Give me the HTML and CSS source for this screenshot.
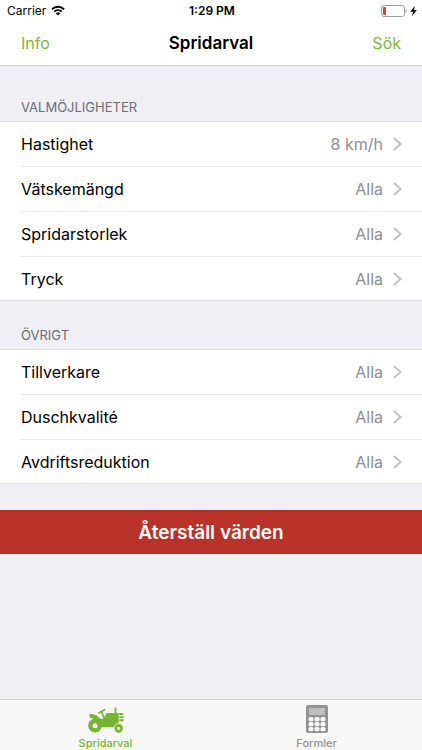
FILE: index.html
```html
<!DOCTYPE html>
<html lang="sv">

<head>
    <meta charset="UTF-8">
    <meta name="viewport" content="width=device-width, initial-scale=1.0">
    <title>Spridarval</title>
    <link rel="stylesheet" href="styles.css">
</head>

<body>
    <header class="header">
        <div class="status-bar">
            <div class="status-left">
                <span>Carrier</span>
                <svg class="wifi" viewBox="0 0 14 11" aria-hidden="true">
                    <path d="M1 4.2a8.6 8.6 0 0 1 12 0M3.2 6.6a5.5 5.5 0 0 1 7.6 0" fill="none" stroke="#000" stroke-width="1.9"/>
                    <path d="M4.8 8.3a3.2 3.2 0 0 1 4.4 0L7 10.6z"/>
                </svg>
            </div>
            <span class="clock">1:29 PM</span>
            <div class="status-right">
                <svg class="battery" viewBox="0 0 26 12" aria-hidden="true">
                    <rect x="0.5" y="0.5" width="23" height="11" rx="2.5" fill="#fff" stroke="#a0a0a0"/>
                    <rect x="2" y="2" width="3" height="8" rx="0.8" fill="#ee3a30"/>
                    <path d="M24.6 4v4q1.2-.6 1.2-2t-1.2-2z" fill="#a0a0a0"/>
                </svg>
                <svg class="bolt" viewBox="0 0 7 10" aria-hidden="true">
                    <path d="M4.8 0L0.2 5.8H3L2 10L6.8 4.1H4z"/>
                </svg>
            </div>
        </div>
        <nav class="nav-bar">
            <a href="#info">Info</a>
            <h1>Spridarval</h1>
            <a href="#sok" class="nav-right">Sök</a>
        </nav>
    </header>

    <main class="content">
        <section class="group">
            <h2>VALMÖJLIGHETER</h2>
            <ul class="list">
                <li><button class="row"><span class="label">Hastighet</span><span class="value">8 km/h</span><svg class="chevron" viewBox="0 0 9 14" aria-hidden="true"><path d="M1 1l6.5 6L1 13"/></svg></button></li>
                <li><button class="row"><span class="label">Vätskemängd</span><span class="value">Alla</span><svg class="chevron" viewBox="0 0 9 14" aria-hidden="true"><path d="M1 1l6.5 6L1 13"/></svg></button></li>
                <li><button class="row"><span class="label">Spridarstorlek</span><span class="value">Alla</span><svg class="chevron" viewBox="0 0 9 14" aria-hidden="true"><path d="M1 1l6.5 6L1 13"/></svg></button></li>
                <li><button class="row"><span class="label">Tryck</span><span class="value">Alla</span><svg class="chevron" viewBox="0 0 9 14" aria-hidden="true"><path d="M1 1l6.5 6L1 13"/></svg></button></li>
            </ul>
        </section>

        <section class="group">
            <h2>ÖVRIGT</h2>
            <ul class="list">
                <li><button class="row"><span class="label">Tillverkare</span><span class="value">Alla</span><svg class="chevron" viewBox="0 0 9 14" aria-hidden="true"><path d="M1 1l6.5 6L1 13"/></svg></button></li>
                <li><button class="row"><span class="label">Duschkvalité</span><span class="value">Alla</span><svg class="chevron" viewBox="0 0 9 14" aria-hidden="true"><path d="M1 1l6.5 6L1 13"/></svg></button></li>
                <li><button class="row"><span class="label">Avdriftsreduktion</span><span class="value">Alla</span><svg class="chevron" viewBox="0 0 9 14" aria-hidden="true"><path d="M1 1l6.5 6L1 13"/></svg></button></li>
            </ul>
        </section>

        <button class="reset">Återställ värden</button>
    </main>

    <nav class="tab-bar">
        <a href="#spridarval" class="tab active">
            <svg class="tractor" viewBox="0 0 108 78" aria-hidden="true">
                <!-- body, seat and hood -->
                <path d="M3 22q14-4 24 4l10 9h10l9-17h36v42H40L30 40 6 32z"/>
                <!-- grille -->
                <path d="M94 18h8q5 0 5 6H94zM94 28h13v5H94zM94 37h13v6H94z"/>
                <!-- exhaust and steering wheel -->
                <path d="M80 2h5v18h-5z"/>
                <path d="M32 18l18-10M41 14l10 26" fill="none" stroke="#76b52f" stroke-width="5" stroke-linecap="round"/>
                <!-- wheels -->
                <circle cx="21" cy="56" r="14" fill="#f7f7f7" stroke="#76b52f" stroke-width="13"/>
                <circle cx="92" cy="64" r="15" fill="#f7f7f7"/>
                <circle cx="92" cy="64" r="9" fill="#f7f7f7" stroke="#76b52f" stroke-width="8"/>
            </svg>
            <span>Spridarval</span>
        </a>
        <a href="#formler" class="tab">
            <svg class="calculator" viewBox="0 0 22 28" aria-hidden="true">
                <rect width="22" height="28" rx="2" fill="#929292"/>
                <rect x="3" y="3" width="16" height="7" fill="#bdbdbd"/>
                <g fill="#f7f7f7">
                    <rect x="2.5" y="12" width="5" height="4.2" rx="1.5"/>
                    <rect x="8.5" y="12" width="5" height="4.2" rx="1.5"/>
                    <rect x="14.5" y="12" width="5" height="4.2" rx="1.5"/>
                    <rect x="2.5" y="17" width="5" height="4.2" rx="1.5"/>
                    <rect x="8.5" y="17" width="5" height="4.2" rx="1.5"/>
                    <rect x="14.5" y="17" width="5" height="4.2" rx="1.5"/>
                    <rect x="2.5" y="22" width="5" height="4.2" rx="1.5"/>
                    <rect x="8.5" y="22" width="5" height="4.2" rx="1.5"/>
                    <rect x="14.5" y="22" width="5" height="4.2" rx="1.5"/>
                </g>
            </svg>
            <span>Formler</span>
        </a>
    </nav>
</body>

</html>
```
FILE: styles.css
```css
* {
    box-sizing: border-box;
}

body {
    margin: 0;
    min-height: 100vh;
    display: flex;
    flex-direction: column;
    font-family: Inter, "Liberation Sans", sans-serif;
    font-size: 16px;
    color: #000;
    background-color: #efeff4;
}

a {
    color: #7cb83a;
    text-decoration: none;
}

button {
    border: none;
    font: inherit;
    cursor: pointer;
}

.header {
    background-color: #fff;
    border-bottom: 1px solid #d0d0d4;
}

.status-bar,
.nav-bar {
    display: grid;
    grid-template-columns: 1fr auto 1fr;
    align-items: center;
}

.status-bar {
    height: 21px;
    padding: 0 5px 0 7px;
    font-size: 12px;
}

.status-left,
.status-right {
    display: flex;
    align-items: center;
    gap: 5px;
}

.status-right {
    justify-content: flex-end;
    gap: 3px;
}

.clock {
    font-weight: 600;
}

.wifi {
    width: 14px;
    height: 11px;
}

.battery {
    width: 26px;
    height: 12px;
}

.bolt {
    width: 7px;
    height: 10px;
}

.nav-bar {
    height: 44px;
    padding: 0 21px;
}

.nav-bar h1 {
    margin: 0;
    font-size: 17px;
    font-weight: 600;
}

.nav-right {
    text-align: right;
}

.content {
    flex: 1;
}

.group h2 {
    margin: 0;
    padding: 26px 21px 6px;
    font-size: 13px;
    line-height: 16px;
    font-weight: 400;
    color: #6d6d72;
}

.group:first-child h2 {
    padding-top: 33px;
}

.list {
    margin: 0;
    padding: 0;
    list-style: none;
    background-color: #fff;
    border-top: 1px solid #dfdfe3;
    border-bottom: 1px solid #dfdfe3;
}

.list li {
    padding-left: 21px;
}

.row {
    display: flex;
    align-items: center;
    width: 100%;
    height: 45px;
    padding: 0 20px 0 0;
    text-align: left;
    color: #000;
    background: none;
    border-bottom: 1px solid #e6e6e8;
}

.list li:last-child .row {
    height: 43px;
    border-bottom: none;
}

.label {
    flex: 1;
}

.value {
    margin-right: 10px;
    color: #8e8e93;
}

.chevron {
    width: 9px;
    height: 14px;
    fill: none;
    stroke: #c2c2c7;
    stroke-width: 2;
}

.reset {
    display: block;
    width: 100%;
    height: 44px;
    margin-top: 26px;
    font-size: 19px;
    font-weight: 600;
    color: #fff;
    background-color: #b93229;
}

.tab-bar {
    display: flex;
    height: 51px;
    background-color: #f7f7f7;
    border-top: 1px solid #d0d0d4;
}

.tab {
    flex: 1;
    display: flex;
    flex-direction: column;
    align-items: center;
    justify-content: flex-end;
    gap: 4px;
    padding-bottom: 1px;
    font-size: 11px;
    line-height: 12px;
    font-weight: 500;
    color: #929292;
}

.tab.active {
    color: #76b52f;
}

.tractor {
    width: 36px;
    height: 26px;
    fill: #76b52f;
}

.calculator {
    width: 22px;
    height: 28px;
}
```
